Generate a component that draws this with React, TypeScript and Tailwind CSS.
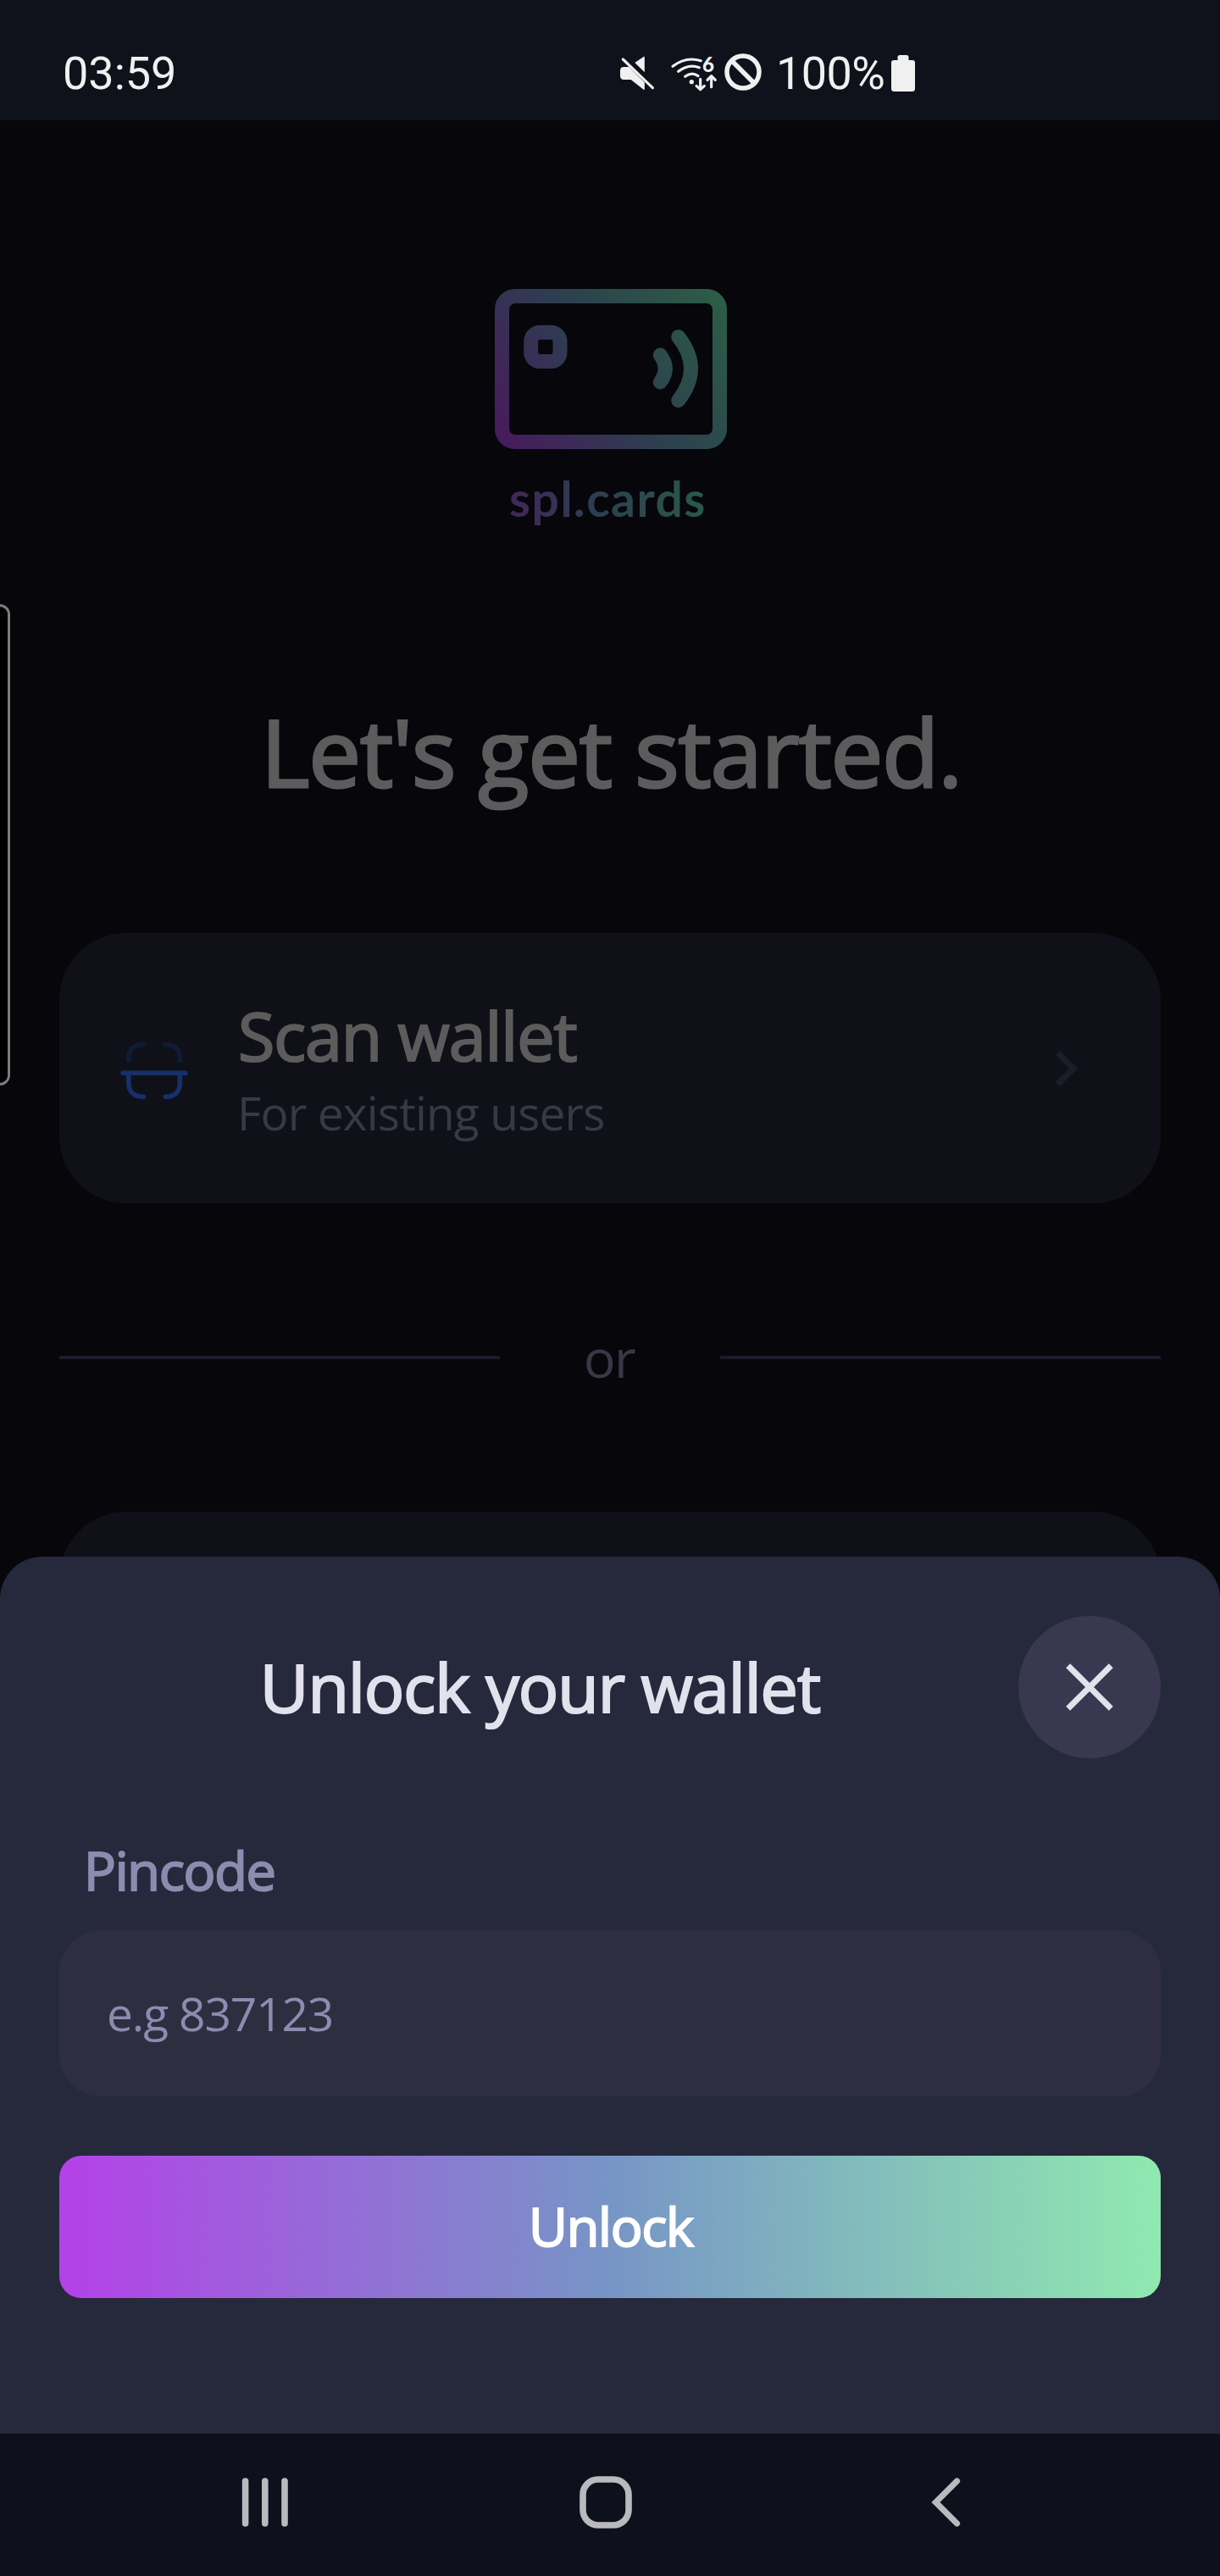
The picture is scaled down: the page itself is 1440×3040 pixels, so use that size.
const MutedIcon = () => (
  <svg className="mt-[5px] h-[44px] w-[44px]" viewBox="90 75 132 132" fill="#f0f0f0">
    <path d="M148 102 180 80.500Q182.500 79.500 182.500 83V136Z" />
    <path d="M109 117H127L182.500 172V195Q182.500 199 179 197L134 162H109Q96 161 96 149V130Q96 117 109 117Z" />
    <path d="M106 90 211 191" stroke="#f0f0f0" strokeWidth="9.500" strokeLinecap="round" />
  </svg>
);

const WifiIcon = () => (
  <svg className="mt-[5px] h-[44px] w-[56px] overflow-visible" viewBox="36 30 168 132" fill="none" stroke="#f0f0f0" strokeWidth="9.500" strokeLinecap="round" strokeLinejoin="round">
    <path d="M42 70Q88 34 142 50" />
    <path d="M62 88Q98 60 136 74" />
    <path d="M86 106Q109 88 132 104" />
    <circle cx="109" cy="125" r="8" fill="#f0f0f0" stroke="none" />
    <path d="M140 115V151M126 139 140 152 154 139" />
    <path d="M179 143V104M165 118 179 104 193 118" />
    <text x="147" y="91" fill="#f0f0f0" stroke="none" fontFamily="Lato" fontWeight="900" fontSize="72">6</text>
  </svg>
);

const BlockedIcon = () => (
  <svg className="mt-[3px] h-[44px] w-[44px]" viewBox="0 0 44 44" fill="none" stroke="#f0f0f0" strokeWidth="5.500">
    <circle cx="22" cy="22" r="19" />
    <path d="M8.500 8.500 35.500 35.500" />
  </svg>
);

const BatteryIcon = () => (
  <svg className="mt-[5px] h-[43px] w-[28px]" viewBox="0 0 28 43" fill="#f0f0f0">
    <path d="M10 0H18Q20.500 0 20.500 2.500V6H25Q28 6 28 9V39.500Q28 43 24.500 43H3.500Q0 43 0 39.500V9Q0 6 3 6H7.500V2.500Q7.500 0 10 0Z" />
  </svg>
);

const StatusBar = () => (
  <header className="flex h-[142px] shrink-0 items-start bg-[#0f111b] pt-[60px] pl-[74px] font-['Roboto'] text-[54px] leading-[54px] text-[#f0f0f0]">
    <span className="w-[656px]">03:59</span>
    <MutedIcon />
    <div className="w-[18px]" />
    <WifiIcon />
    <div className="w-[7px]" />
    <BlockedIcon />
    <span className="ml-[17px] w-[136px] tracking-[-0.6px]">100%</span>
    <BatteryIcon />
  </header>
);

const Logo = () => (
  <>
    <svg className="mt-[199px] ml-[584px] h-[189px] w-[274px]" viewBox="0 0 274 189" fill="none" stroke="url(#brand)" strokeWidth="17" strokeLinecap="round">
      <defs>
        <linearGradient id="brand" gradientUnits="userSpaceOnUse" x1="0" y1="189" x2="274" y2="0">
          <stop offset="0.050" stopColor="#471c5b" />
          <stop offset="0.440" stopColor="#2f3b52" />
          <stop offset="0.520" stopColor="#2c414e" />
          <stop offset="1" stopColor="#2d5f46" />
        </linearGradient>
      </defs>
      <rect x="8.500" y="8.500" width="257" height="172" rx="15.500" />
      <rect x="42.700" y="51.300" width="34.300" height="34.300" rx="10.500" />
      <path d="M195.300 78Q207.200 94 195.300 110" />
      <path d="M216.700 56.500Q246.300 94 216.700 131.500" />
    </svg>
    <div className="mt-[28px] ml-[601px] h-[60px]">
      <span className="inline-block bg-[linear-gradient(90deg,#402659,#2f3b52_40%,#2a5549_90%,#2b5a47)] bg-clip-text pb-[12px] font-['Lato'] text-[57px] leading-[60px] font-bold tracking-[1.5px] text-transparent">
        spl.cards
      </span>
    </div>
  </>
);

const ScanIcon = () => (
  <svg className="mt-[129px] h-[68px] w-[80px]" viewBox="142 1230 80 68" fill="none" strokeWidth="5.600" strokeLinecap="round">
    <path d="M151.800 1251.500V1249C151.800 1239 158 1232.800 168 1232.800H169.300M195.300 1232.800H196.500C206.500 1232.800 212.300 1239 212.300 1249V1251.500" stroke="#101c36" />
    <path d="M151.800 1267V1278C151.800 1288 158 1294.200 168 1294.200H169.300M195.300 1294.200H196.500C206.500 1294.200 212.300 1288 212.300 1278V1267M145.300 1266.200H219" stroke="#16306a" />
  </svg>
);

const Divider = () => (
  <div className="mt-[142px] flex h-[80px] items-center">
    <div className="h-[4px] flex-1 bg-[#1a1c29]" />
    <span className="w-[260px] pr-[2px] text-center text-[63px] leading-[80px] tracking-[-1.6px] text-[#383846]">or</span>
    <div className="h-[4px] flex-1 bg-[#1a1c29]" />
  </div>
);

const UnlockSheet = () => (
  <section className="absolute inset-x-0 bottom-0 h-[1035px] rounded-t-[50px] bg-[#26293b] px-[70px] pt-[70px]">
    <div className="flex h-[168px] items-center">
      <h2 className="flex-1 pl-[3px] text-center text-[79px] leading-[100px] tracking-[-1px] text-[#e2e2ec] [-webkit-text-stroke:2.2px_#e2e2ec]">
        Unlock your wallet
      </h2>
      <button className="flex size-[168px] items-center justify-center rounded-full bg-[#393850]" aria-label="Close">
        <svg className="size-[60px]" viewBox="0 0 60 60" stroke="#e2e2ec" strokeWidth="7">
          <path d="M4.700 4.700 55.300 55.300M55.300 4.700 4.700 55.300" />
        </svg>
      </button>
    </div>
    <label htmlFor="pin" className="mt-[92px] block pl-[29px] text-[63px] leading-[80px] tracking-[-1.25px] text-[#8c8cb0] [-webkit-text-stroke:2px_#8c8cb0]">
      Pincode
    </label>
    <input
      id="pin"
      placeholder="e.g 837123"
      className="mt-[31px] block h-[196px] w-full rounded-[49px] bg-[#2e2e40] px-[56px] pb-[2px] text-[55px] tracking-[-1.1px] text-[#8c8cb0] outline-none placeholder:text-[#8c8cb0] placeholder:opacity-100"
    />
    <button className="mt-[70px] block h-[168px] w-full rounded-[26px] bg-[linear-gradient(90deg,#b441e8,#7795c6_50%,#90e9b0)] pb-px pl-[2px] text-center text-[63px] tracking-[-1.3px] text-white [-webkit-text-stroke:2px_white]">
      Unlock
    </button>
  </section>
);

const NavBar = () => (
  <nav className="flex h-[168px] shrink-0 items-center bg-[#0e101b] pb-[6px] pl-[285px]">
    <svg className="h-[58px] w-[56px]" viewBox="0 0 56 58" stroke="#b9b9be" strokeWidth="7.600" strokeLinecap="round">
      <path d="M4.600 4V54M27.800 4V54M51 4V54" />
    </svg>
    <svg className="ml-[343px] h-[62px] w-[62px]" viewBox="0 0 62 62" fill="none" stroke="#b9b9be" strokeWidth="7.600">
      <rect x="4" y="4" width="54" height="54" rx="18" />
    </svg>
    <svg className="ml-[353px] h-[58px] w-[36px]" viewBox="0 0 36 58" fill="none" stroke="#b9b9be" strokeWidth="7.200" strokeLinecap="round">
      <path d="M30.500 4 5.500 29 30.500 54" />
    </svg>
  </nav>
);

export default function App() {
  return (
    <div className="flex h-[3040px] w-[1440px] flex-col overflow-hidden bg-[#06060b] font-['Open_Sans',sans-serif]">
      <StatusBar />
      <main className="relative flex-1 overflow-hidden">
        <Logo />
        <h1 className="mt-[208px] pl-[308px] text-[110px] leading-[120px] tracking-[-1.15px] whitespace-nowrap text-[#5c5c5c] [-webkit-text-stroke:3px_#5c5c5c]">
          Let's get started.
        </h1>
        <div className="mt-[155px] px-[70px]">
          <div className="flex h-[319px] items-start rounded-[79px] bg-[#101118] pl-[72px]">
            <ScanIcon />
            <div className="mt-[81px] ml-[58px] flex-1">
              <div className="pl-px text-[79px] leading-[80px] tracking-[-1.1px] text-[#5c5c5c] [-webkit-text-stroke:2.2px_#5c5c5c]">Scan wallet</div>
              <div className="mt-[15px] text-[55px] leading-[72px] tracking-[-0.85px] text-[#383846]">For existing users</div>
            </div>
            <svg className="mt-[137px] mr-[93px] h-[46px] w-[34px]" viewBox="0 0 34 46" fill="none" stroke="#1b1d29" strokeWidth="7">
              <path d="M5.500 4.500 24 23 5.500 41.500" />
            </svg>
          </div>
          <Divider />
          <div className="mt-[142px] h-[319px] rounded-[79px] bg-[#101118]" />
        </div>
        <div className="absolute top-[571px] left-[-20px] h-[568px] w-[32px] rounded-r-[12px] border-[3px] border-[#7c7c7c] bg-black" />
        <UnlockSheet />
      </main>
      <NavBar />
    </div>
  );
}
